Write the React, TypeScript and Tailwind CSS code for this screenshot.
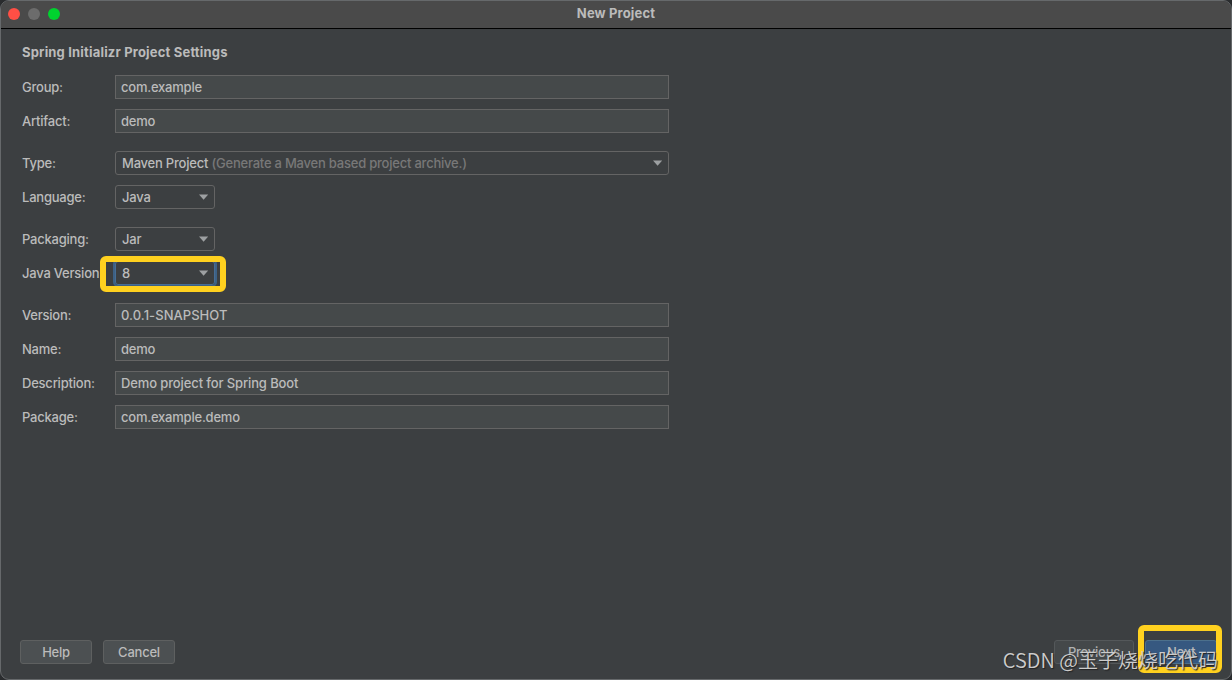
import type { ReactNode } from "react";

const Arrow = () => (
  <svg width="10" height="6" viewBox="0 0 10 6" className="shrink-0">
    <path d="M0 0.5h9.2L4.6 5.7z" fill="#9da0a2" />
  </svg>
);

const Row = ({ label, spacing = "", children }: { label: string; spacing?: string; children: ReactNode }) => (
  <div className={`flex h-6 items-center ${spacing}`}>
    <label className="w-[93px] shrink-0 pt-0.5 whitespace-nowrap">{label}</label>
    {children}
  </div>
);

const Field = ({ value, textClass = "" }: { value: string; textClass?: string }) => (
  <div className="flex h-6 w-[554px] items-center border border-[#646464] bg-[#45494a] pt-0.5 pl-[5px]">
    <span className={textClass}>{value}</span>
  </div>
);

const Select = ({ value, hint, size = "w-[100px]", focused }: { value: string; hint?: string; size?: string; focused?: boolean }) => (
  <div
    className={`flex h-6 items-center justify-between rounded-[3px] border pr-[5px] pl-[6px] ${size} ${
      focused ? "border-[#466d94] ring-2 ring-[#3d6185]" : "border-[#646464]"
    }`}
  >
    <span className="pt-0.5 whitespace-pre">
      {value}
      {hint && <span className="text-[#787878]"> {hint}</span>}
    </span>
    <Arrow />
  </div>
);

const Button = ({ label, className = "" }: { label: string; className?: string }) => (
  <button className={`h-6 rounded-[3px] border text-center leading-[23px] ${className || "w-[72px] border-[#5e6060] bg-[#4c5052]"}`}>
    {label}
  </button>
);

export default function App() {
  return (
    <div className="h-[680px] w-[1232px] overflow-hidden bg-[#2a2c2e]">
      <div className="relative flex h-[680px] flex-col overflow-hidden rounded-[9px] border border-[#66696b] bg-[#3c3f41] font-['Inter','Liberation_Sans',sans-serif] text-[13px] font-medium tracking-[-0.22px] text-[#bbbbbb]">
        <header className="relative flex h-7 shrink-0 items-center justify-center border-b border-black bg-[#4a4a4a] pb-px">
          <div className="absolute top-[7px] left-[7px] flex gap-2">
            <span className="size-3 rounded-full bg-[#ff4f45]" />
            <span className="size-3 rounded-full bg-[#6c6c6c]" />
            <span className="size-3 rounded-full bg-[#00d32f]" />
          </div>
          <h1 className="font-bold tracking-[0.15px]">New Project</h1>
        </header>

        <main className="grow pt-[13px] pl-[21px]">
          <h2 className="mb-[13px] h-5 leading-5 font-bold tracking-[0.18px]">Spring Initializr Project Settings</h2>
          <Row label="Group:">
            <Field value="com.example" />
          </Row>
          <Row label="Artifact:" spacing="mt-[10px]">
            <Field value="demo" />
          </Row>
          <Row label="Type:" spacing="mt-[18px]">
            <Select value="Maven Project" hint="(Generate a Maven based project archive.)" size="w-[554px]" />
          </Row>
          <Row label="Language:" spacing="mt-[10px]">
            <Select value="Java" />
          </Row>
          <Row label="Packaging:" spacing="mt-[18px]">
            <Select value="Jar" />
          </Row>
          <Row label="Java Version:" spacing="mt-[10px]">
            <div className="relative">
              <Select value="8" focused />
              <div className="absolute -top-[5px] -left-[15px] h-9 w-[126px] rounded-[6px] border-[6px] border-[#ffd11f]" />
            </div>
          </Row>
          <Row label="Version:" spacing="mt-[18px]">
            <Field value="0.0.1-SNAPSHOT" textClass="tracking-[0.05px]" />
          </Row>
          <Row label="Name:" spacing="mt-[10px]">
            <Field value="demo" />
          </Row>
          <Row label="Description:" spacing="mt-[10px]">
            <Field value="Demo project for Spring Boot" textClass="tracking-[-0.12px]" />
          </Row>
          <Row label="Package:" spacing="mt-[10px]">
            <Field value="com.example.demo" />
          </Row>
        </main>

        <footer className="flex shrink-0 justify-between pr-[14px] pb-[15px] pl-[19px]">
          <div className="flex gap-[11px]">
            <Button label="Help" />
            <Button label="Cancel" />
          </div>
          <div className="flex gap-[11px]">
            <Button label="Previous" className="w-20 border-[#54585a] bg-[#44484a] text-[#b0b2b3]" />
            <div className="relative">
              <Button label="Next" className="w-[72px] border-[#4c708c] bg-[#365880]" />
              <div className="absolute -top-[15px] -left-[7px] h-12 w-[84px] rounded-[6px] border-[6px] border-[#ffd11f]" />
            </div>
          </div>
        </footer>

        <div className="absolute right-[13px] bottom-[7px] font-['Noto_Sans_CJK_SC',sans-serif] text-[20px] leading-6 font-[350] tracking-normal whitespace-nowrap text-[#cccccc] [text-shadow:1px_1px_1px_#222]">
          CSDN @玉子烧烧吃代码
        </div>
      </div>
    </div>
  );
}
